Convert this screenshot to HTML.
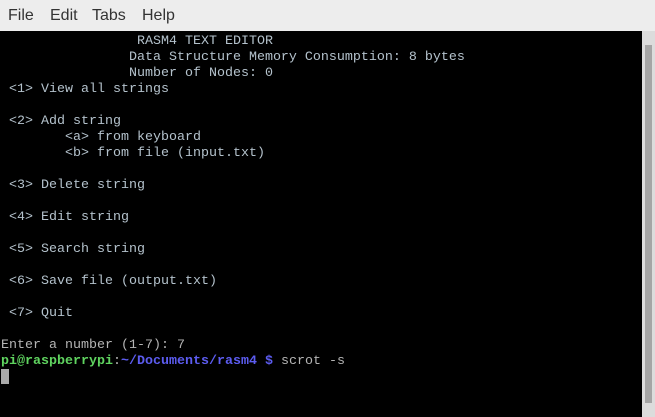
<!DOCTYPE html>
<html><head><meta charset="utf-8"><style>
html,body{margin:0;padding:0;width:655px;height:417px;overflow:hidden;background:#ededed}
.menu{position:absolute;left:0;top:0;width:655px;height:31px;background:#ededed;font-family:"Liberation Sans",sans-serif;font-size:16px;color:#333}
.menu span{position:absolute;top:7px}
.term{position:absolute;left:0;top:31px;width:642px;height:386px;background:#000}
.sb{position:absolute;left:642px;top:31px;width:13px;height:386px;background:#dcdcdc}
.thumb{position:absolute;left:3px;top:14px;width:7px;height:358px;background:#a5a5a5}
pre{position:absolute;left:1px;top:34px;margin:0;font-family:"Liberation Mono",monospace;font-size:13.33px;line-height:16px;color:#b4c2cc}
.g{color:#5fd35f;font-weight:bold}.b{color:#5c5cf0;font-weight:bold}.w{color:#b4b4b4}
.cur{position:absolute;left:1px;top:369px;width:8px;height:15px;background:#aaa}
</style></head><body>
<div class="menu"><span style="left:8px">File</span><span style="left:50px">Edit</span><span style="left:92px">Tabs</span><span style="left:142px">Help</span></div>
<div class="term"></div>
<div class="sb"><div class="thumb"></div></div>
<pre>                 RASM4 TEXT EDITOR
                Data Structure Memory Consumption: 8 bytes
                Number of Nodes: 0
 &lt;1&gt; View all strings

 &lt;2&gt; Add string
        &lt;a&gt; from keyboard
        &lt;b&gt; from file (input.txt)

 &lt;3&gt; Delete string

 &lt;4&gt; Edit string

 &lt;5&gt; Search string

 &lt;6&gt; Save file (output.txt)

 &lt;7&gt; Quit

<span class="w">Enter a number (1-7): 7</span>
<span class="g">pi@raspberrypi</span><span class="w">:</span><span class="b">~/Documents/rasm4 $</span><span class="w"> scrot -s</span></pre>
<div class="cur"></div>
</body></html>
